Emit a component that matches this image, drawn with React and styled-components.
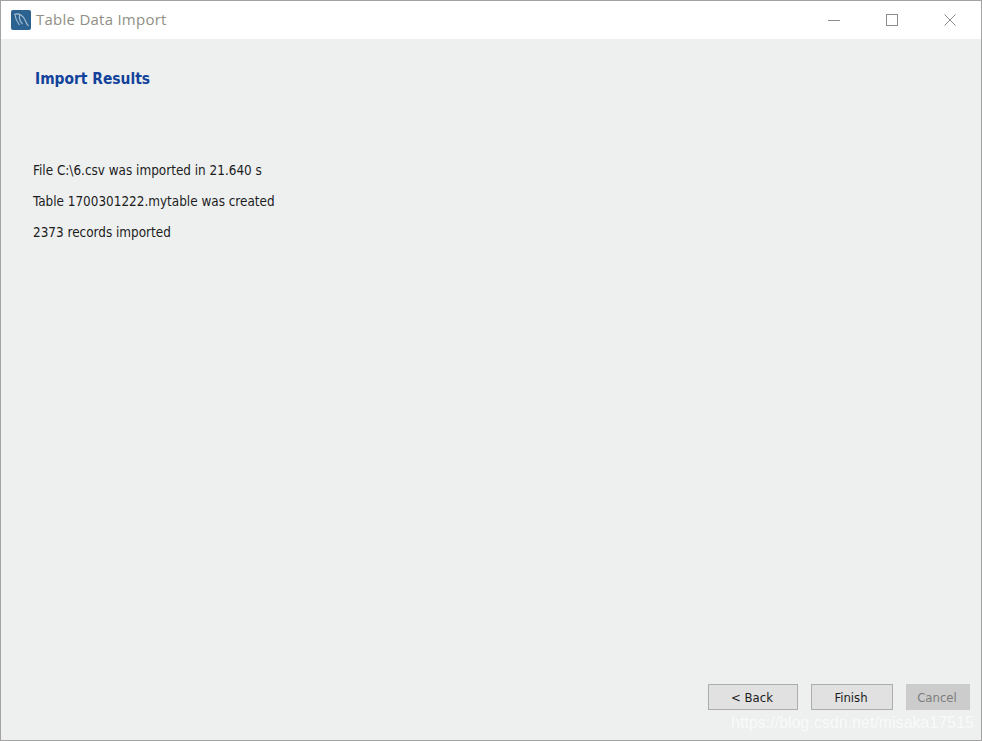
import React from "react";
import styled, { createGlobalStyle } from "styled-components";

const GlobalStyle = createGlobalStyle`
  html, body {
    margin: 0;
    padding: 0;
    background: #eef0f0;
  }
  * {
    box-sizing: border-box;
  }
`;

const Window = styled.div`
  position: relative;
  width: 982px;
  height: 741px;
  display: flex;
  flex-direction: column;
  border: 1px solid #a3a3a3;
  background: #eef0f0;
  overflow: hidden;
`;

const TitleBar = styled.header`
  height: 38px;
  flex: none;
  display: flex;
  align-items: center;
  padding-left: 10px;
  background: #fff;
`;

const AppIcon = styled.svg`
  width: 20px;
  height: 20px;
  flex: none;
`;

const WindowTitle = styled.span`
  flex: 1;
  margin-left: 5px;
  padding-bottom: 2px;
  font: 15px "Open Sans", sans-serif;
  letter-spacing: 0.25px;
  color: #8f8f85;
`;

const Controls = styled.div`
  display: flex;
  align-items: center;
  gap: 46px;
  padding-right: 24px;
  transform: translateX(-1px);
`;

const ControlIcon = styled.svg`
  width: 12px;
  height: 12px;
  fill: none;
  stroke: #8c8c8c;
  stroke-width: 1;
`;

const Content = styled.main`
  flex: 1;
  display: flex;
  flex-direction: column;
  padding: 30px 32px 0;
`;

const Heading = styled.h1`
  margin: 0 0 0 2px;
  font: bold 15.4px/20px "DejaVu Sans Condensed", "DejaVu Sans", sans-serif;
  color: #12429a;
`;

const Results = styled.div`
  margin-top: 74px;
  display: flex;
  flex-direction: column;
  gap: 15px;
`;

const ResultLine = styled.p`
  margin: 0;
  font: 13.4px/16px "DejaVu Sans Condensed", "DejaVu Sans", sans-serif;
  color: #1c1c1c;
`;

const Footer = styled.footer`
  flex: none;
  display: flex;
  justify-content: flex-end;
  gap: 13px;
  padding: 0 11px 30px 0;
`;

const Button = styled.button`
  width: ${(p) => p.$width}px;
  height: 26px;
  padding: 0 2px 0 0;
  border: 1px solid ${(p) => (p.disabled ? "#cbcbcb" : "#adadad")};
  background: ${(p) => (p.disabled ? "#cccccc" : "#e1e1e1")};
  color: ${(p) => (p.disabled ? "#7d7d7d" : "#1c1c1c")};
  font: 13px "DejaVu Sans Condensed", "DejaVu Sans", sans-serif;
`;

const Watermark = styled.span`
  position: absolute;
  right: 7px;
  bottom: 8px;
  font: 16px "Liberation Sans", sans-serif;
  color: rgba(255, 255, 255, 0.62);
  filter: blur(0.4px);
`;

export default function App() {
  return (
    <>
      <GlobalStyle />
      <Window>
        <TitleBar>
          <AppIcon viewBox="0 0 20 20">
            <rect width="20" height="20" rx="2" fill="#2b6290" />
            <path
              d="M3 4.5C8 2.5 12.5 5.5 14.5 11c.7 2 1.8 3.5 3 5M4 5c.5 4 2 7 4.5 10M8.5 5c-.5 3.5.5 6.5 3 9"
              fill="none"
              stroke="#a9c2d6"
              strokeWidth="1.1"
            />
          </AppIcon>
          <WindowTitle>Table Data Import</WindowTitle>
          <Controls>
            <ControlIcon viewBox="0 0 12 12">
              <path d="M0 6.5h12" />
            </ControlIcon>
            <ControlIcon viewBox="0 0 12 12">
              <rect x="0.5" y="0.5" width="11" height="11" />
            </ControlIcon>
            <ControlIcon viewBox="0 0 12 12">
              <path d="M0.5 0.5l11 11M11.5 0.5l-11 11" />
            </ControlIcon>
          </Controls>
        </TitleBar>
        <Content>
          <Heading>Import Results</Heading>
          <Results>
            <ResultLine>File C:\6.csv was imported in 21.640 s</ResultLine>
            <ResultLine>Table 1700301222.mytable was created</ResultLine>
            <ResultLine>2373 records imported</ResultLine>
          </Results>
        </Content>
        <Footer>
          <Button $width={90}>&lt; Back</Button>
          <Button $width={82}>Finish</Button>
          <Button $width={64} disabled>
            Cancel
          </Button>
        </Footer>
        <Watermark>https://blog.csdn.net/misaka17515</Watermark>
      </Window>
    </>
  );
}
